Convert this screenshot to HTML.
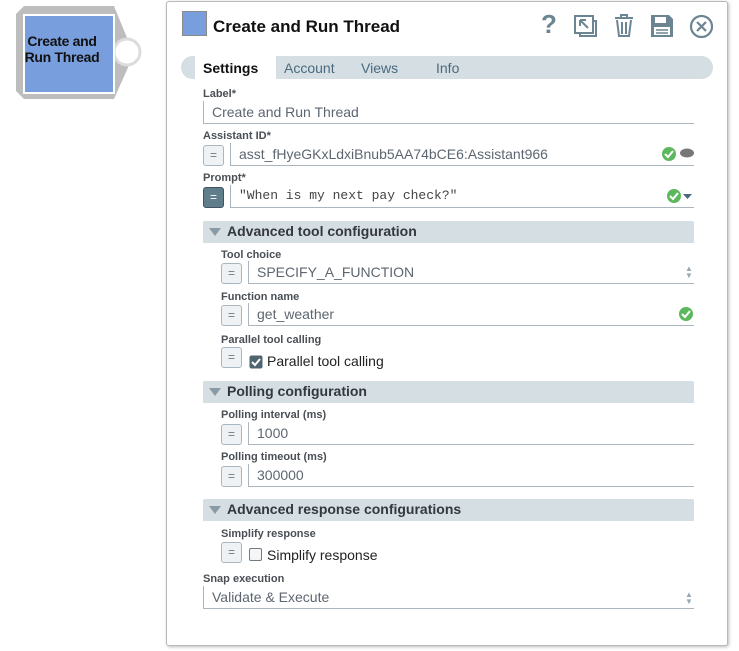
<!DOCTYPE html>
<html><head><style>
*{box-sizing:border-box;margin:0;padding:0}
body{width:739px;height:651px;background:#fff;font-family:"Liberation Sans",sans-serif;position:relative;overflow:hidden}
.a{position:absolute}
.lbl{position:absolute;font-size:11px;font-weight:bold;color:#4a4f55}
.inp{position:absolute;height:23px;border-left:1px solid #a9b6bf;border-bottom:1px solid #a9b6bf;font-size:14px;color:#5d6670;padding:3px 0 0 8px;white-space:nowrap}
.btn{position:absolute;width:21px;height:21px;border:1px solid #a9b6bf;border-radius:3px;background:#eef2f4;color:#6e7a84;font-size:12px;text-align:center;line-height:18px}
.sec{position:absolute;left:203px;width:491px;height:22px;background:#d5dee2;font-size:14px;font-weight:bold;color:#33383d;padding:2px 0 0 24px;border-radius:2px 2px 0 0}
.sec:before{content:"";position:absolute;left:6px;top:7px;border-left:6px solid transparent;border-right:6px solid transparent;border-top:8px solid #8a9aa4}
</style></head><body>
<svg class="a" style="left:14px;top:5px" width="130" height="96">
<polygon points="10,1 100,1 116,40 116,58 100,94 10,94 2,86 2,9" fill="#bdbdbd"/>
<circle cx="113" cy="47" r="13" fill="#fff" stroke="#dcdcdc" stroke-width="3"/>
<rect x="10" y="10" width="90" height="78" fill="#789ede" stroke="#fff" stroke-width="2"/>
</svg>
<div class="a" style="left:20px;top:33px;width:84px;text-align:center;font-size:14px;font-weight:bold;line-height:16px;color:#111;letter-spacing:-0.3px">Create and Run Thread</div>
<div class="a" style="left:166px;top:1px;width:562px;height:645px;border:1px solid #b9b9b9;border-radius:3px;box-shadow:1px 1px 3px #bbb;background:#fff"></div>
<div class="a" style="left:182px;top:11px;width:25px;height:25px;background:#789ede;border:1px solid #8a8a8a"></div>
<div class="a" style="left:213px;top:17px;font-size:17px;font-weight:bold;color:#111">Create and Run Thread</div>
<div class="a" style="left:541px;top:9px;font-size:26px;font-weight:bold;color:#6b8592">?</div>
<svg class="a" style="left:573px;top:14px" width="26" height="24" fill="none" stroke="#6b8592" stroke-width="2"><rect x="2" y="2" width="18" height="17"/><path d="M20 7h3v15H7v-3"/><path d="M15 14L7 6M7 6v6M7 6h6"/></svg>
<svg class="a" style="left:613px;top:14px" width="22" height="24" fill="none" stroke="#6b8592" stroke-width="2"><path d="M2 4h18M8 4V1h6v3M4 6l2 16h10l2-16M9 8v12M13 8v12"/></svg>
<svg class="a" style="left:650px;top:14px" width="24" height="24"><path d="M1 1h18l4 4v18H1z" fill="#6b8592"/><rect x="5" y="3" width="11" height="6" fill="#fff"/><rect x="4" y="13" width="16" height="8" fill="#fff"/><path d="M6 16h12M6 19h12" stroke="#6b8592" stroke-width="1.5"/></svg>
<svg class="a" style="left:689px;top:14px" width="25" height="25" fill="none" stroke="#6b8592" stroke-width="2.2"><circle cx="12.5" cy="12.5" r="10.5"/><path d="M8 8l9 9M17 8l-9 9"/></svg>
<div class="a" style="left:181px;top:56px;width:532px;height:23px;background:#d5dee2;border-radius:12px"></div>
<div class="a" style="left:195px;top:56px;width:81px;height:23px;background:#fff"></div>
<div class="a" style="left:203px;top:60px;font-size:14px;font-weight:bold;color:#111">Settings</div>
<div class="a" style="left:284px;top:60px;font-size:14px;color:#4a6a80">Account</div>
<div class="a" style="left:361px;top:60px;font-size:14px;color:#4a6a80">Views</div>
<div class="a" style="left:436px;top:60px;font-size:14px;color:#4a6a80">Info</div>
<div class="lbl" style="left:203px;top:88px">Label*</div>
<div class="inp" style="left:203px;top:101px;width:491px">Create and Run Thread</div>
<div class="lbl" style="left:203px;top:130px">Assistant ID*</div>
<div class="btn" style="left:203px;top:145px">=</div>
<div class="inp" style="left:230px;top:143px;width:464px">asst_fHyeGKxLdxiBnub5AA74bCE6:Assistant966</div>
<svg class="a" style="left:661px;top:146px" width="34" height="16"><circle cx="8" cy="8" r="7" fill="#5cb85c"/><path d="M4 8l3 3 5-6" stroke="#fff" stroke-width="2" fill="none"/><ellipse cx="26" cy="7" rx="7" ry="4.5" fill="#777"/></svg>
<div class="lbl" style="left:203px;top:172px">Prompt*</div>
<div class="btn" style="left:203px;top:187px;background:#607d8b;border-color:#3f5360;color:#fff">=</div>
<div class="inp" style="left:230px;top:185px;width:464px;font-family:'Liberation Mono',monospace;font-size:13px;color:#444">"When is my next pay check?"</div>
<svg class="a" style="left:666px;top:188px" width="28" height="16"><circle cx="8" cy="8" r="7" fill="#5cb85c"/><path d="M4 8l3 3 5-6" stroke="#fff" stroke-width="2" fill="none"/><path d="M17 6h9l-4.5 5z" fill="#4a6a80"/></svg>
<div class="sec" style="top:221px">Advanced tool configuration</div>
<div class="lbl" style="left:221px;top:249px">Tool choice</div>
<div class="btn" style="left:221px;top:263px">=</div>
<div class="inp" style="left:248px;top:261px;width:446px">SPECIFY_A_FUNCTION</div>
<div class="a" style="left:685px;top:265px;font-size:8px;line-height:7px;color:#9aa8b2">▲<br>▼</div>
<div class="lbl" style="left:221px;top:291px">Function name</div>
<div class="btn" style="left:221px;top:305px">=</div>
<div class="inp" style="left:248px;top:303px;width:446px">get_weather</div>
<svg class="a" style="left:678px;top:306px" width="16" height="16"><circle cx="8" cy="8" r="7" fill="#5cb85c"/><path d="M4 8l3 3 5-6" stroke="#fff" stroke-width="2" fill="none"/></svg>
<div class="lbl" style="left:221px;top:334px">Parallel tool calling</div>
<div class="btn" style="left:221px;top:347px">=</div>
<svg class="a" style="left:249px;top:355px" width="14" height="14"><rect x="0.5" y="0.5" width="13" height="13" rx="2" fill="#4f6470"/><path d="M3 7l3 3 5-6" stroke="#fff" stroke-width="2" fill="none"/></svg>
<div class="a" style="left:267px;top:353px;font-size:14px;color:#222">Parallel tool calling</div>
<div class="sec" style="top:381px">Polling configuration</div>
<div class="lbl" style="left:221px;top:409px">Polling interval (ms)</div>
<div class="btn" style="left:221px;top:424px">=</div>
<div class="inp" style="left:248px;top:422px;width:446px">1000</div>
<div class="lbl" style="left:221px;top:451px">Polling timeout (ms)</div>
<div class="btn" style="left:221px;top:466px">=</div>
<div class="inp" style="left:248px;top:464px;width:446px">300000</div>
<div class="sec" style="top:499px">Advanced response configurations</div>
<div class="lbl" style="left:221px;top:528px">Simplify response</div>
<div class="btn" style="left:221px;top:542px">=</div>
<div class="a" style="left:249px;top:548px;width:13px;height:13px;border:1px solid #6e7a84;border-radius:2px;background:#f4f6f7"></div>
<div class="a" style="left:267px;top:547px;font-size:14px;color:#222">Simplify response</div>
<div class="lbl" style="left:203px;top:573px">Snap execution</div>
<div class="inp" style="left:203px;top:586px;width:491px">Validate &amp; Execute</div>
<div class="a" style="left:685px;top:591px;font-size:8px;line-height:7px;color:#9aa8b2">▲<br>▼</div>
</body></html>
